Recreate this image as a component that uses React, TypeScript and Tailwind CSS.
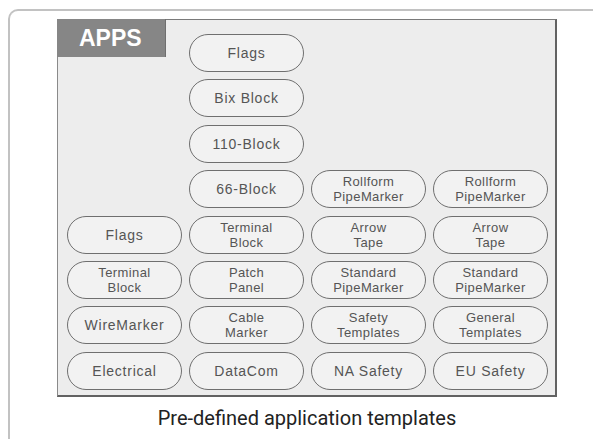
const rows: (string[] | null)[][] = [
  [null, ["Flags"], null, null],
  [null, ["Bix Block"], null, null],
  [null, ["110-Block"], null, null],
  [null, ["66-Block"], ["Rollform", "PipeMarker"], ["Rollform", "PipeMarker"]],
  [["Flags"], ["Terminal", "Block"], ["Arrow", "Tape"], ["Arrow", "Tape"]],
  [["Terminal", "Block"], ["Patch", "Panel"], ["Standard", "PipeMarker"], ["Standard", "PipeMarker"]],
  [["WireMarker"], ["Cable", "Marker"], ["Safety", "Templates"], ["General", "Templates"]],
  [["Electrical"], ["DataCom"], ["NA Safety"], ["EU Safety"]],
];

function Pill({ lines }: { lines: string[] }) {
  return (
    <div
      className={`flex flex-col items-center justify-center rounded-full border-[1.5px] border-[#6f6f6f] bg-[#f2f2f2] text-center text-[#555] ${
        lines.length > 1
          ? "text-[13px] leading-[15px] tracking-[0.4px]"
          : "text-[14px] leading-[16px] tracking-[0.75px]"
      }`}
    >
      {lines.map((l) => (
        <span key={l}>{l}</span>
      ))}
    </div>
  );
}

export default function App() {
  return (
    <div className="h-[439px] w-[593px] overflow-hidden bg-white [font-family:'Liberation_Sans',Arial,sans-serif]">
      <div className="ml-[8px] mt-[9px] h-[440px] rounded-tl-[10px] border-l-2 border-t-2 border-[#c2c2c2] pl-[47px] pt-[8px]">
        <div className="relative w-[500px] border-b-2 border-l border-r-2 border-t border-b-[#626262] border-l-[#8a8a8a] border-r-[#626262] border-t-[#7a7a7a] bg-[#ededed] pb-[5px] pl-[9px] pr-[7px] pt-[14px]">
          {/* APPS tab */}
          <div className="absolute -left-px -top-px flex h-[38px] w-[109px] items-center border-r border-[#6f6f6f] bg-[#868686] pl-[22px] text-[23px] font-bold leading-none text-white">
            APPS
          </div>

          <div className="grid auto-rows-[38px] grid-cols-[repeat(4,115px)] gap-x-[7px] gap-y-[7.4px]">
            {rows.flatMap((row, r) =>
              row.map((cell, c) =>
                cell ? <Pill key={`${r}-${c}`} lines={cell} /> : <div key={`${r}-${c}`} />
              )
            )}
          </div>
        </div>

        <p className="mt-[6px] w-[500px] text-center text-[20px] text-[#222] [font-family:Roboto,sans-serif]">
          Pre-defined application templates
        </p>
      </div>
    </div>
  );
}
